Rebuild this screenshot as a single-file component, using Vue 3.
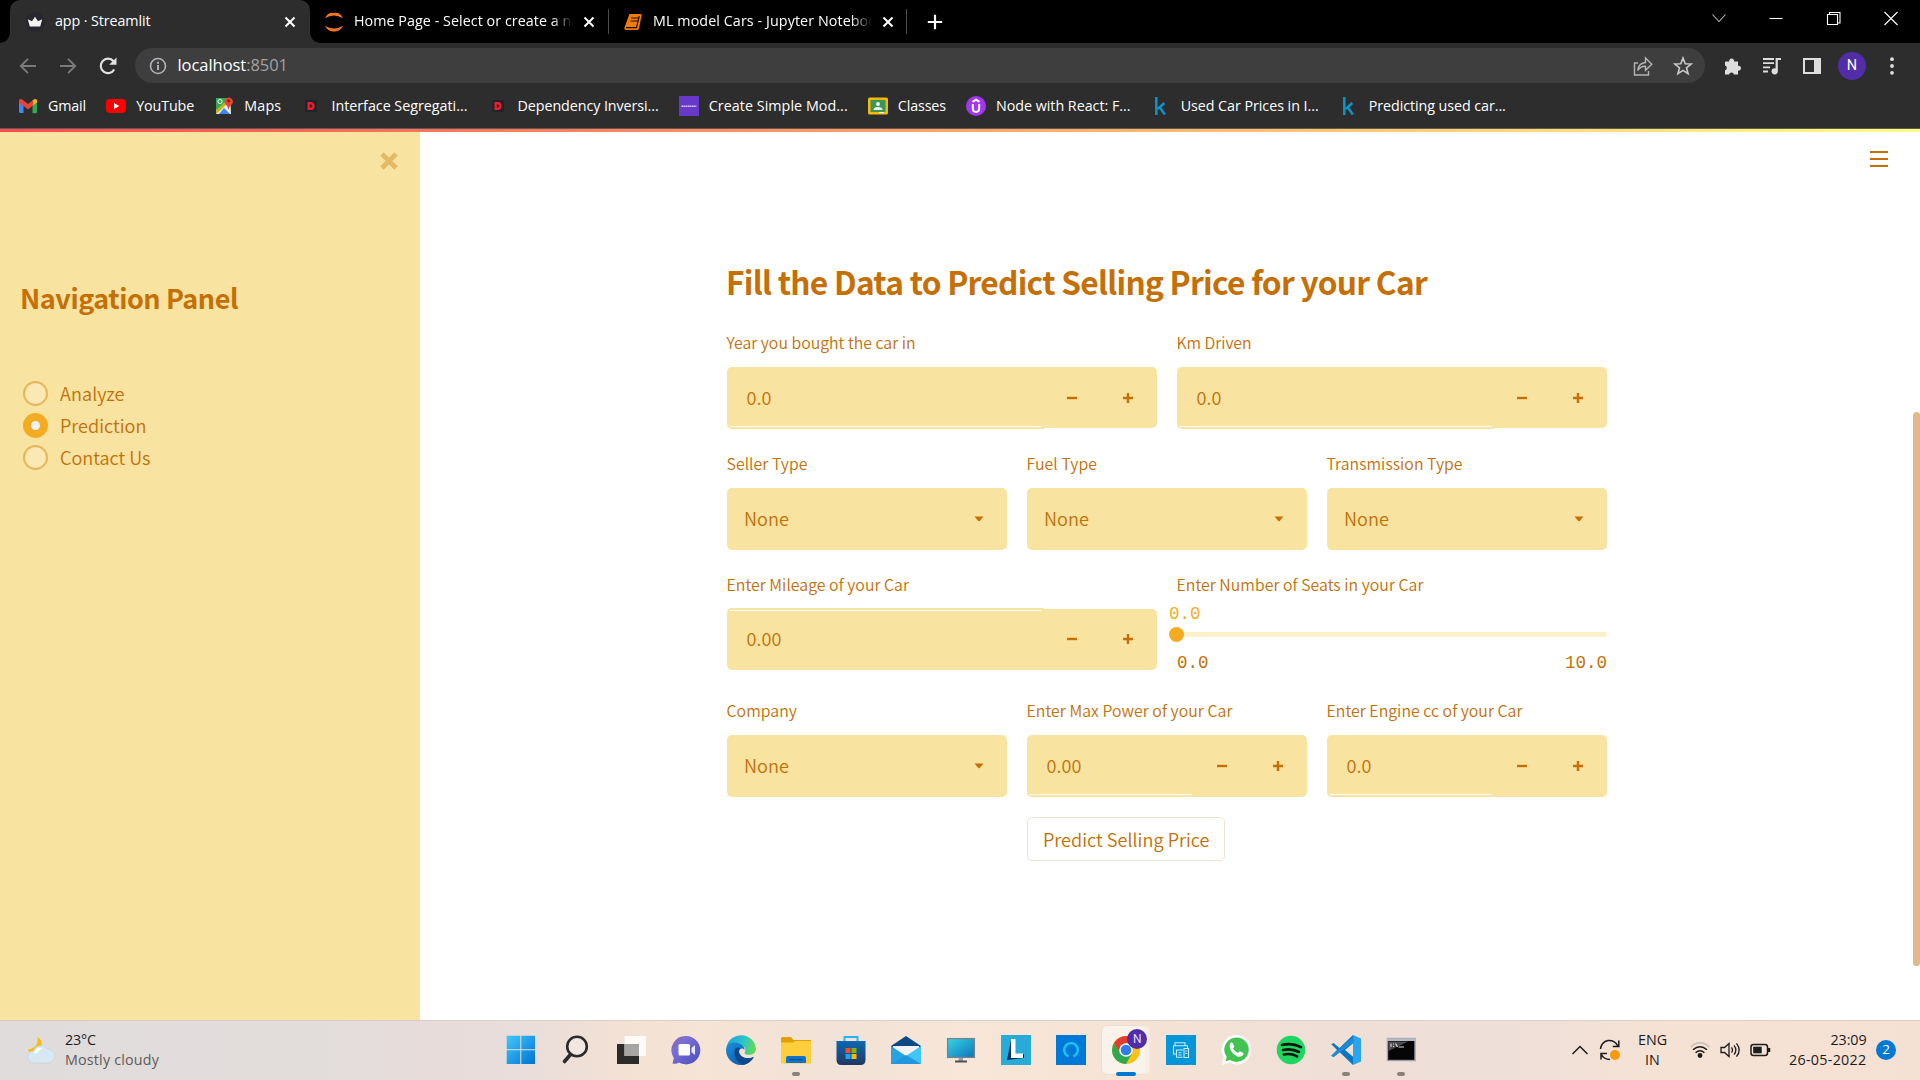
<script setup>
// Spreads letters so a label takes exactly the given width.
const vFit = {
  mounted(el, { value }) {
    const natural = el.getBoundingClientRect().width
    el.style.letterSpacing = (value - natural) / el.textContent.length + 'px'
  },
}

const dIcon = '<rect x="4" y="4" width="12" height="12" rx="2" fill="#222326"/><path d="M6.500 6h3.300q3.700 0 3.700 4t-3.700 4H6.500z" fill="#ee1c2e"/><path d="M9.300 8.300v3.400l2-1.700z" fill="#222326" stroke="#222326" stroke-width=".6"/>'
const kIcon = '<path d="M5.300 1v18M13.300 7l-6.500 6M8.800 11.200l5 7.300" stroke="#0f93c4" stroke-width="2.500" fill="none"/>'
const bookmarks = [
  { t: 'Gmail', w: 38, i: '<path d="M1 16.500V5l4.500 3.500v8.500H2q-1 0-1-1z" fill="#4285f4"/><path d="M14.500 8.500L19 5v11.500q0 .8-1 .8h-3.500z" fill="#34a853"/><path d="M14.500 4.500l1.300-1Q19 2 19 5v1.300l-4.500 3.500z" fill="#fbbc04"/><path d="M1 5q0-3 3.200-1.500L10 8l5-3.800v5.400l-5 3.800-9-7z" fill="#ea4335"/>' },
  { t: 'YouTube', w: 58, i: '<rect x="0" y="3" width="20" height="14" rx="4" fill="#f00"/><path d="M8 7v6l5.300-3z" fill="#fff"/>' },
  { t: 'Maps', w: 37, i: '<path d="M2 2h15v16H2z" fill="#34a853"/><path d="M2 18L16 5l1 13z" fill="#e8eaed"/><path d="M5 18l5-6 6 6z" fill="#4285f4"/><path d="M2 18V14L12 5l2 2z" fill="#fbbc04" opacity=".7"/><circle cx="6" cy="5.500" r="2.100" fill="none" stroke="#fff" stroke-width=".9"/><path d="M14.500 14q-.5-3.500-2.600-5.500a4 4 0 1 1 5.700 0Q15.200 10 14.500 14z" fill="#ea4335"/><circle cx="14.600" cy="5" r="1.400" fill="#8c1a11"/>' },
  { t: 'Interface Segregati...', w: 136, i: dIcon },
  { t: 'Dependency Inversi...', w: 141, i: dIcon },
  { t: 'Create Simple Mod...', w: 139, i: '<rect width="20" height="20" fill="#6639c8"/><path d="M2.500 10.300h15" stroke="#d9ccf5" stroke-width="1.500" stroke-dasharray="1.600 .5"/>' },
  { t: 'Classes', w: 48, i: '<rect y="1.500" width="20" height="17" rx="1.500" fill="#f4b80f"/><rect x="2.500" y="4" width="15" height="12" fill="#3d9655"/><circle cx="10" cy="8" r="1.900" fill="#fff"/><path d="M5.500 14q0-3 4.500-3t4.500 3z" fill="#e8f3ea"/><path d="M11 16h5v1.200h-5z" fill="#fff"/>' },
  { t: 'Node with React: F...', w: 134.5, i: '<circle cx="10" cy="10" r="10" fill="#a435f0"/><path d="M6.500 5.800L10 3.700l3.500 2.100M6.800 8v4.500q0 3.400 3.200 3.400t3.200-3.400V8" stroke="#fff" stroke-width="2" fill="none"/>' },
  { t: 'Used Car Prices in I...', w: 138, i: kIcon },
  { t: 'Predicting used car...', w: 137, i: kIcon },
]

const toolIcons = [
  '<path d="M3.500 5.500h3.700a2.500 2.500 0 1 1 4.900 0H16v4.200a2.500 2.500 0 1 1 0 4.900V18.500h-4a2.500 2.500 0 0 0-4.900 0H3v-4.200a2.500 2.500 0 0 0 0-4.800V6z" fill="#dedede"/>',
  '<path d="M1 3h11M1 7.200h11M1 11.400h7M1 15.500h5" stroke="#dedede" stroke-width="1.800"/><path d="M14.700 15V3H19" stroke="#dedede" stroke-width="2.200" fill="none"/><circle cx="12.700" cy="15.300" r="3.100" fill="#dedede"/>',
  '<path d="M2 3h16v14H2z" fill="none" stroke="#dedede" stroke-width="2"/><path d="M12 2h7v16h-7z" fill="#dedede"/>',
]

const nav = [
  { t: 'Analyze', w: 64.5 },
  { t: 'Prediction', w: 86.5, on: true },
  { t: 'Contact Us', w: 90.5 },
]

const rows = [
  { cls: 'r1', f: [
    { l: 'Year you bought the car in', w: 189, v: '0.0', vw: 25, k: 'num' },
    { l: 'Km Driven', w: 75, v: '0.0', vw: 25, k: 'num' },
  ] },
  { cls: 'r2', f: [
    { l: 'Seller Type', w: 81, k: 'sel' },
    { l: 'Fuel Type', w: 70.5, k: 'sel' },
    { l: 'Transmission Type', w: 136, k: 'sel' },
  ] },
  { cls: 'r3', f: [
    { l: 'Enter Mileage of your Car', w: 182.5, v: '0.00', vw: 35, k: 'num' },
    { l: 'Enter Number of Seats in your Car', w: 247, k: 'slider' },
  ] },
  { cls: 'r4', f: [
    { l: 'Company', w: 70.5, k: 'sel' },
    { l: 'Enter Max Power of your Car', w: 206, v: '0.00', vw: 35, k: 'num' },
    { l: 'Enter Engine cc of your Car', w: 196, v: '0.0', vw: 25, k: 'num' },
  ] },
]

const apps = [
  { n: 'start', i: '<defs><linearGradient id="wn" x1="0" y1="0" x2="1" y2="1" gradientUnits="objectBoundingBox"><stop stop-color="#42c8fb"/><stop offset="1" stop-color="#0072d6"/></linearGradient></defs><path d="M.7.700h13.600v13.600H.7zM15.300.7H29v13.600H15.300zM.7 15.300h13.600V29H.7zM15.300 15.300H29V29H15.300z" fill="url(#wn)"/>' },
  { n: 'search', i: '<circle cx="16" cy="11.500" r="9.800" fill="#fff" fill-opacity=".25" stroke="#2b2b2b" stroke-width="2.600"/><path d="M9.500 19.500L3.500 26.500" stroke="#2b2b2b" stroke-width="3.600" stroke-linecap="round"/>' },
  { n: 'tasks', i: '<path d="M1 9h22v20H1z" fill="#2c2c2a"/><path d="M8.500 1H30v20H8.500z" fill="#fff" fill-opacity=".85"/><path d="M8.500 9H23v12H8.500z" fill="#a6a5a3"/>' },
  { n: 'chat', i: '<defs><linearGradient id="ch" x1="0" y1="0" x2="1" y2="1"><stop stop-color="#8a61a8"/><stop offset=".3" stop-color="#7b70d4"/><stop offset="1" stop-color="#4a4fbf"/></linearGradient></defs><path d="M15 1a14.200 14.200 0 1 1-7 26.500Q5 29.500 1.500 28.500L2.800 23A14.200 14.200 0 0 1 15 1z" fill="url(#ch)"/><rect x="7.500" y="9" width="11.500" height="11.500" rx="1.500" fill="#fff"/><path d="M20.500 13l3.500-3v10l-3.500-3z" fill="#e8e8fb"/>' },
  { n: 'edge', i: '<defs><linearGradient id="e1" x1="0" y1=".3" x2="1" y2=".5"><stop stop-color="#1f9ede"/><stop offset=".55" stop-color="#2cc5c9"/><stop offset="1" stop-color="#62dc4c"/></linearGradient><linearGradient id="e2" x1="0" y1="0" x2="1" y2="1"><stop stop-color="#1a8fdd"/><stop offset="1" stop-color="#0c4f9f"/></linearGradient></defs><path d="M.5 12A15 15 0 0 1 30 13c.5 5-4 7.500-8.500 6.800-3-.5-3.500-1.800-2.500-3.300 1.500-2.500-1-6.500-6-6.500C7 10 2 13 .5 12z" fill="url(#e1)"/><path d="M0 15c0-5 4.500-8 9-7.500 6 .5 10 4 9.500 7.500-1.500-2.500-5-2-5.500 1.500-.5 5 7 9 14.500 5.500C24 27.500 20 30 15 30 6.500 30 0 23 0 15z" fill="url(#e2)"/><path d="M9.500 13C6 20 11 28.500 18 29.700 23 28.500 26 25.500 28 22c-8 3.500-15-1-15-5.500 0-1.500.5-2.800 1.500-3.300-1.500-1-3.500-.9-5-.2z" fill="#0d4a8d"/>' },
  { n: 'files', run: true, i: '<path d="M0 3.500Q0 2 1.500 2H10l2.500 3H30v8H0z" fill="#dfa104"/><path d="M0 7.500h12.500L14 6h16v22.500H0z" fill="#fdcf3d"/><path d="M5 28V23q0-2 2-2h16q2 0 2 2v5z" fill="#1272c8"/><path d="M8.500 24.700h13" stroke="#0a4f94" stroke-width="1.200"/>' },
  { n: 'store', i: '<defs><linearGradient id="st" x1="0" y1="0" x2="0" y2="1"><stop stop-color="#0b69b5"/><stop offset="1" stop-color="#213763"/></linearGradient></defs><path d="M8.500 7V2h13v5" fill="none" stroke="#27b5ef" stroke-width="2"/><path d="M.5 6h29v19q0 5-5 5h-19q-5 0-5-5z" fill="url(#st)"/><path d="M9.500 13h5v5h-5z" fill="#f25022"/><path d="M15.500 13h5v5h-5z" fill="#7fba00"/><path d="M9.500 19h5v5h-5z" fill="#1aa7ee"/><path d="M15.500 19h5v5h-5z" fill="#ffb900"/>' },
  { n: 'mail', i: '<path d="M0 11L15 1l15 10-3 8H3z" fill="#0b4a87"/><path d="M2 11h26v6l-13 6L2 17z" fill="#f3f3f5"/><path d="M0 11l15 10L30 29H0z" fill="#28a3e6"/><path d="M30 11L15 21l15 8z" fill="#3fc6f6"/><path d="M0 29L15 20l15 9z" fill="#2197df"/>' },
  { n: 'pc', i: '<defs><linearGradient id="pc" x1="0" y1="0" x2="1" y2="1"><stop stop-color="#35d5e3"/><stop offset="1" stop-color="#0f73bd"/></linearGradient></defs><rect x="1.600" y="3.600" width="26.800" height="18.800" fill="url(#pc)" stroke="#77838c" stroke-width="1.300"/><path d="M12.500 23h4.500v3h-4.500z" fill="#9aa1a6"/><path d="M9 25.500h12v2H9z" fill="#4a5157"/>' },
  { n: 'lens', i: '<rect width="30" height="30" fill="#27acd9"/><path d="M10 5L6 25l17-2V19H14z" fill="#0b2f6b"/><path d="M10 4h4.500v14.500H22V23H10z" fill="#fff"/>' },
  { n: 'alexa', i: '<rect width="30" height="30" fill="#0078d7"/><path d="M12.500 21.300a6.800 6.800 0 1 1 5 0" fill="none" stroke="#18c8fb" stroke-width="2.300"/>' },
  { n: 'chrome', run: true, active: true, i: '<circle cx="15" cy="15" r="14" fill="#fbc116"/><path d="M2.900 8A14 14 0 0 1 27.100 8H15L8.900 18.500z" fill="#e33b2e"/><path d="M2.900 8a14 14 0 0 0 12.100 21l6-10.500h-12z" fill="#2da94f"/><circle cx="15" cy="15" r="6.800" fill="#fff"/><circle cx="15" cy="15" r="5.300" fill="#2f7de9"/>' },
  { n: 'printer', i: '<rect width="30" height="30" fill="#0596d9"/><path d="M9 10.500V7.700h10v2.800M10 19H7.500v-8.300h14V13M10.500 15h6.500M10.500 14.800v7.500h6M12.500 17.700h3M12.500 20h3M18 13.500h4.500v9H18zM19.300 16h2M19.300 18.500h2" fill="none" stroke="#c9ebfa" stroke-width="1.100"/>' },
  { n: 'whatsapp', i: '<path d="M15.500 0A14.700 14.700 0 1 1 8.500 27.500L.7 30l2.200-7.700A14.700 14.700 0 0 1 15.500 0z" fill="#fff"/><path d="M15.500 2.500a12.200 12.200 0 1 1-6.500 22.500l-4.500 1.200 1.200-4.300A12.200 12.200 0 0 1 15.500 2.500z" fill="#43c351"/><path d="M9 8.500q1.500-2 3 0l1.200 2.700q0 1-1.200 2.200 1.700 3.300 5 4.600l1.800-1.800q3 1 3.700 2.100c0 3-3.500 4-6 3.200C12 19.500 7.500 14.500 9 8.500z" fill="#fff"/>' },
  { n: 'spotify', i: '<circle cx="15" cy="15" r="14.300" fill="#1fd760"/><path d="M6 10q10-2.500 19 2.200M7 15q8.500-2 16 2M7.800 19.500q7-1.500 13.200 1.800" fill="none" stroke="#0b140e" stroke-width="2.600" stroke-linecap="round"/>' },
  { n: 'code', run: true, i: '<path d="M22 0L8.500 13 2.500 8 .3 9.300 6 15 .3 20.700 2.500 22l6-5L22 30l1-7.500-9-7.500 9-7.500z" fill="#0d76c2"/><path d="M22 0l8 3.500v23L22 30z" fill="#29a5ee"/><path d="M2.500 22L22.500 7.500V1.500L.3 20.700z" fill="#1b8bd6"/>' },
  { n: 'cmd', run: true, i: '<rect x="1.500" y="3.500" width="27.500" height="22" fill="#060606" stroke="#9da0aa" stroke-width="1.400"/><path d="M1 3.500h28.500v2.500H1z" fill="#b6bac6"/><path d="M2.300 6.500h20L2.300 16z" fill="#4b4b4b"/><path d="M5 8.500v3.500M7 9h1M7 11.500h1M9.500 8.500l2 3.500M12.500 12H18" stroke="#ddd" fill="none" stroke-width="1.100"/>' },
]
</script>

<template>
  <div class="screen">
    <header class="tabs">
      <div class="tab active">
        <svg class="fav" width="20" height="20" viewBox="0 0 20 20"><circle cx="10" cy="10" r="9.700" fill="#262730" /><path d="M2.800 7.300L7 9.300 10 4.800l3 4.500 4.200-2-2 7.200H4.800z" fill="#f3f3f3" /></svg>
        <span class="title"><span v-fit="95.500">app · Streamlit</span></span>
        <svg class="x" width="12" height="12" viewBox="0 0 12 12"><path d="M1.500 1.500l9 9M10.500 1.500l-9 9" /></svg>
      </div>
      <div class="tab second">
        <svg class="fav" width="20" height="20" viewBox="0 0 20 20"><path d="M1 6.200Q4 0 10 .9 16 0 19 6.200 10 .8 1 6.200zM1 13.800Q4 20 10 19.400 16 20 19 13.800 10 19.200 1 13.800z" fill="#f37626" /></svg>
        <span class="title fade"><span v-fit="226">Home Page - Select or create a no</span></span>
        <svg class="x" width="12" height="12" viewBox="0 0 12 12"><path d="M1.500 1.500l9 9M10.500 1.500l-9 9" /></svg>
      </div>
      <div class="tab third">
        <svg class="fav" width="20" height="20" viewBox="0 0 20 20"><path d="M6.500 2H17.500q1.500 0 1.100 1.500L16 16.500q-.4 1.500-2 1.500H3.200Q1 18 1.500 15.500z" fill="#f57c00" /><path d="M8 6h7.500M7.500 9H15M3 15.700h10.500L16.300 4" fill="none" stroke="#1b0d00" stroke-width="1.200" /></svg>
        <span class="title fade"><span v-fit="224">ML model Cars - Jupyter Noteboo</span></span>
        <svg class="x" width="12" height="12" viewBox="0 0 12 12"><path d="M1.500 1.500l9 9M10.500 1.500l-9 9" /></svg>
      </div>
      <svg class="plus" width="16" height="16" viewBox="0 0 16 16"><path d="M8 .8v14.400M.8 8h14.400" stroke="#fff" stroke-width="2.200" /></svg>
      <div class="win">
        <svg viewBox="0 0 16 16"><path d="M1.500 4.500L8 11.500l6.500-7" stroke="#bbb" /></svg>
        <svg viewBox="0 0 16 16"><path d="M1.500 8.500h13" /></svg>
        <svg viewBox="0 0 16 16"><path d="M1.500 4.500h10v10h-10zM3.500 4.500v-2h10.500v10.500H12" /></svg>
        <svg viewBox="0 0 16 16"><path d="M1.500 2l13 13M14.500 2l-13 13" /></svg>
      </div>
    </header>

    <div class="toolbar">
      <div class="arrows">
        <svg viewBox="0 0 20 20"><path d="M18 10H3M10 2.800L2.800 10l7.200 7.200" stroke="#7b7b7b" stroke-width="1.900" fill="none" /></svg>
        <svg viewBox="0 0 20 20"><path d="M2 10h15M10 2.800l7.200 7.200-7.200 7.200" stroke="#7b7b7b" stroke-width="1.900" fill="none" /></svg>
        <svg viewBox="0 0 20 20"><path d="M16.200 13.500A7.200 7.200 0 1 1 15.500 5.300" stroke="#e2e2e2" stroke-width="2.200" fill="none" /><path d="M18.500 1.500v7.300h-7.300z" fill="#e2e2e2" /></svg>
      </div>
      <div class="omni">
        <svg class="info" width="18" height="18" viewBox="0 0 18 18"><circle cx="9" cy="9" r="7.500" fill="none" stroke="#b0b3b8" stroke-width="1.600" /><path d="M9 8v5M9 4.800v1.900" stroke="#b0b3b8" stroke-width="1.900" /></svg>
        <span v-fit="110.500" class="url">localhost<i>:8501</i></span>
        <svg class="share" width="20" height="20" viewBox="0 0 20 20"><path d="M5 7H1.500v12h14v-4M4.800 14.500Q5.500 7 12.500 6.500V2l6.300 6.300-6.300 6v-4Q7.500 10 4.800 14.500z" fill="none" stroke="#b4b4b4" stroke-width="1.400" /></svg>
        <svg width="20" height="20" viewBox="0 0 20 20"><path d="M10 2l2.200 5.700 6 .3-4.700 3.800 1.600 5.900L10 14.400l-5.100 3.300 1.600-5.900L1.800 8l6-.3z" fill="none" stroke="#c9c9c9" stroke-width="1.600" /></svg>
      </div>
      <div class="tools">
        <svg v-for="(t, n) in toolIcons" :key="n" viewBox="0 0 20 20" v-html="t" />
        <span class="me">N</span>
        <svg viewBox="0 0 20 20" fill="#dedede"><circle cx="10" cy="3.200" r="1.900" /><circle cx="10" cy="10" r="1.900" /><circle cx="10" cy="16.800" r="1.900" /></svg>
      </div>
    </div>

    <div class="bookmarks">
      <div v-for="b in bookmarks" :key="b.t" class="bm">
        <svg width="20" height="20" viewBox="0 0 20 20" v-html="b.i" />
        <span v-fit="b.w">{{ b.t }}</span>
      </div>
    </div>
    <div class="deco" />

    <div class="page">
      <aside>
        <svg class="close" width="18" height="18" viewBox="0 0 18 18"><path d="M2 2l14 14M16 2L2 16" stroke="#e4b964" stroke-width="4.600" /></svg>
        <h2><span v-fit="218">Navigation Panel</span></h2>
        <div v-for="n in nav" :key="n.t" class="radio" :class="{ on: n.on }">
          <b /><span v-fit="n.w">{{ n.t }}</span>
        </div>
      </aside>
      <main>
        <div class="content">
          <h1><span v-fit="701">Fill the Data to Predict Selling Price for your Car</span></h1>
          <div v-for="r in rows" :key="r.cls" class="row" :class="r.cls">
            <div v-for="f in r.f" :key="f.l" class="field">
              <label><span v-fit="f.w">{{ f.l }}</span></label>
              <div v-if="f.k === 'num'" class="box num">
                <div class="input"><span v-fit="f.vw">{{ f.v }}</span></div>
                <div class="steps">
                  <svg viewBox="0 0 10 10"><path d="M0 5h10" /></svg>
                  <svg viewBox="0 0 10 10"><path d="M0 5h10M5 0v10" /></svg>
                </div>
              </div>
              <div v-else-if="f.k === 'sel'" class="box sel">
                <span v-fit="45">None</span>
                <svg width="10" height="6" viewBox="0 0 10 6"><path d="M.5.500h9L5.700 5Q5 5.700 4.300 5z" fill="#c56f06" /></svg>
              </div>
              <div v-else class="slider">
                <span class="val">0.0</span>
                <div class="track"><b /></div>
                <div class="ticks"><span>0.0</span><span>10.0</span></div>
              </div>
            </div>
          </div>
          <button><span v-fit="166.500">Predict Selling Price</span></button>
        </div>
        <svg class="menu" width="18" height="18" viewBox="0 0 18 18"><path d="M0 2h18M0 9h18M0 16h18" stroke="#c56f06" stroke-width="2.200" /></svg>
        <div class="scroll" />
      </main>
    </div>

    <footer>
      <div class="weather">
        <svg width="30" height="28" viewBox="0 0 30 28"><path d="M11.500 1q5.500 3 4 10t-9 6Q3 16.500 1.500 13.500 13 12 11.500 1z" fill="#f8bd0d" /><path d="M8 27a6 6 0 0 1-.5-12 7.500 7.500 0 0 1 13.500-2 7 7 0 0 1 1.500 14z" fill="#d7e8f3" stroke="#bccfdc" stroke-width=".6" /><path d="M8 17q3-7 9-4-4 0-5.500 4z" fill="#fff" /></svg>
        <div class="two left"><span v-fit="31">23°C</span><span v-fit="94" class="dim">Mostly cloudy</span></div>
      </div>
      <div class="apps">
        <div v-for="a in apps" :key="a.n" class="app" :class="{ run: a.run, active: a.active }">
          <svg width="30" height="30" viewBox="0 0 30 30" v-html="a.i" />
          <span v-if="a.active" class="badge">N</span>
        </div>
      </div>
      <div class="tray">
        <svg class="up" width="18" height="12" viewBox="0 0 18 12"><path d="M1.500 10L9 2.500l7.500 7.500" /></svg>
        <svg class="sync" width="22" height="22" viewBox="0 0 22 22"><path d="M1.500 10a9 9 0 0 1 17.300-3M19.800 1.500v6h-6M2 20.500v-6h6M2 14.800q2.500 5.700 9 5.700" /><circle cx="16" cy="16" r="5" fill="#f99a08" stroke="none" /></svg>
        <div class="two mid lang"><span v-fit="29">ENG</span><span v-fit="15">IN</span></div>
        <svg class="wifi" width="20" height="18" viewBox="0 0 20 18"><path d="M.8 6Q10-2.500 19.200 6" stroke="#c8bdb6" /><path d="M3 8.700q7-6 14 0M5.600 11.700q4.400-4 8.800 0" /><circle cx="10" cy="14.500" r="1.700" fill="#1c1c1c" /></svg>
        <svg class="vol" width="20" height="18" viewBox="0 0 20 18"><path d="M1 6.500h3.500L9 2.500v13l-4.500-4H1zM11.500 6.300q2 2.700 0 5.400M14 4.300q3.700 4.700 0 9.400M16.500 2.300q5.300 6.700 0 13.400" stroke-width="1.300" /></svg>
        <svg class="bat" width="21" height="14" viewBox="0 0 21 14"><rect x="1" y="1.500" width="16.500" height="11" rx="2.500" /><rect x="3.200" y="3.700" width="8.500" height="6.600" fill="#1c1c1c" stroke="none" /><path d="M19 5v4" stroke-width="2.500" /></svg>
        <div class="two right"><span v-fit="36">23:09</span><span v-fit="77.500">26-05-2022</span></div>
        <span class="count">2</span>
      </div>
    </footer>
  </div>
</template>

<style>
html, body { margin: 0; overflow: hidden; }
</style>

<style scoped>
* { box-sizing: border-box; }
svg { display: block; flex: none; }
span { display: inline-block; white-space: nowrap; }
.screen { width: 1920px; height: 1080px; display: flex; flex-direction: column; font-family: "Open Sans", "Noto Sans", sans-serif; font-size: 14.3px; color: #fff; overflow: hidden; background: #fff; }

/* browser tabs */
.tabs { height: 43px; flex: none; background: #000; display: flex; align-items: center; padding-left: 10px; }
.tab { height: 43px; display: flex; align-items: center; flex: none; position: relative; }
.tab .title { line-height: 22px; margin-left: 10px; margin-top: -1px; }
.tab .x { margin-left: auto; }
.tab .x path { stroke: #fff; stroke-width: 2; }
.tab.active { width: 300px; background: #2d2d2d; border-radius: 10px 10px 0 0; padding: 0 14px 0 15px; }
.tab.active::before, .tab.active::after { content: ""; position: absolute; bottom: 0; width: 10px; height: 10px; }
.tab.active::before { left: -10px; background: radial-gradient(circle at 0 0, #000 9.500px, #2d2d2d 10px); }
.tab.active::after { right: -10px; background: radial-gradient(circle at 100% 0, #000 9.500px, #2d2d2d 10px); }
.tab.second { width: 299px; padding: 0 14px 0 14px; }
.tab.third { width: 298px; padding: 0 13px 0 14px; }
.tab.second::after, .tab.third::after { content: ""; position: absolute; right: 0; top: 9px; width: 1px; height: 25px; background: #4c4c4c; }
.fade { width: 227px; -webkit-mask-image: linear-gradient(90deg, #000 198px, transparent 219px); mask-image: linear-gradient(90deg, #000 198px, transparent 219px); }
.plus { margin-left: 20px; }
.win { margin-left: auto; display: flex; gap: 41.300px; padding: 0 21px 7px 0; }
.win svg { width: 16px; height: 16px; fill: none; stroke: #fff; stroke-width: 1.100; }

/* address bar */
.toolbar { height: 45px; flex: none; background: #2d2d2d; display: flex; align-items: center; }
.arrows { display: flex; gap: 20px; padding-left: 17.500px; width: 135px; }
.arrows svg { width: 20px; height: 20px; }
.omni { width: 1570px; height: 35px; border-radius: 18px; background: #3e3e3e; display: flex; align-items: center; padding: 0 12.500px 0 13.500px; }
.url { margin: -1px 0 0 11px; font-size: 16.500px; line-height: 24px; }
.url i { font-style: normal; color: #a2a2a2; }
.share { margin-left: auto; margin-right: 20px; }
.tools { display: flex; align-items: center; gap: 20px; margin-left: 17px; }
.tools svg { width: 20px; height: 20px; }
.me { width: 28px; height: 28px; margin: 0 -4px; border-radius: 50%; background: #512da8; font: 14.500px/28px Roboto, sans-serif; text-align: center; }

.bookmarks { height: 40px; flex: none; background: #2d2d2d; display: flex; align-items: center; gap: 20.150px; padding: 0 0 4px 18px; }
.bm { display: flex; align-items: center; gap: 10px; flex: none; }
.bm span { line-height: 22px; margin-top: -1px; }
.deco { height: 4px; flex: none; border-top: 1px solid #5a5a5c; background: linear-gradient(90deg, #ff4b4b, #fffd80); }

/* app */
.page { flex: none; height: 888px; display: flex; font-family: "Noto Sans CJK SC", "Open Sans", sans-serif; font-weight: 350; color: #c56f06; font-size: 18.100px; }
aside { width: 420px; background: #f8e3a0; padding: 20px 22px 0 23px; }
.close { margin-left: auto; }
h1, h2 { margin: 0; font-weight: 600; }
h2 { font-size: 27px; line-height: 40px; margin: 108px 0 59px -3px; }
.radio { height: 32px; display: flex; align-items: center; line-height: 32px; }
.radio b { width: 25px; height: 25px; border-radius: 50%; border: 2px solid #e4b65e; background: #fbe8b2; margin-right: 12px; }
.radio.on b { border: 8.500px solid #f3ac22; background: #f0f2f6; }
main { flex: 1; display: flex; align-items: flex-start; position: relative; background: #fff; }
.content { width: 880px; margin-left: 307px; padding-top: 129px; }
h1 { font-size: 31.700px; line-height: 40px; margin-bottom: 30px; margin-left: -1px; }
.row { display: flex; gap: 20px; margin-bottom: 22px; }
.field { flex: 1 1 0; min-width: 0; }
label { display: block; height: 24px; line-height: 24px; font-size: 15.850px; margin-bottom: 12px; margin-left: -.5px; }
.row:not(.r1) { margin-top: 23px; }
.row { margin-bottom: 0; }
.r3 label { margin-bottom: 11px; }
.row.r4 { margin-top: 29px; margin-bottom: 20px; }
.box { height: 62px; display: flex; align-items: center; }
.sel { background: #f8e3a0; border-radius: 5px; padding: 0 23px 0 17px; justify-content: space-between; line-height: 28px; }
.sel span { margin-top: -2px; }
.num { align-items: stretch; }
.input { flex: 1; background: #f8e3a0; border-radius: 5px 0 0 5px; padding-left: 19.500px; line-height: 60px; position: relative; }
.input::after { content: ""; position: absolute; left: 3px; right: 2px; bottom: 2px; height: 1px; background: #fff; }
.steps { width: 113px; background: #f8e3a0; border-radius: 0 5px 5px 0; display: flex; align-items: center; justify-content: space-between; padding: 0 24px 0 23px; }
.steps svg { width: 10px; height: 10px; }
.steps path { stroke: #c56f06; stroke-width: 2.400; }
.r1 .steps { height: 61px; }
.r3 .steps { height: 61px; margin-top: 1px; padding-bottom: 1px; }
.r3 .input::after { bottom: auto; top: 2px; }
.slider { font-family: "Liberation Mono", monospace; font-size: 17.500px; line-height: 20px; height: 62px; display: flex; flex-direction: column; }
.val { color: #f3ac22; margin: -4px 0 0 -8px; height: 20px; flex: none; }
.track { height: 5px; flex: none; margin-top: 8px; border-radius: 3px; background: #fbf0ca; position: relative; }
.track b { position: absolute; left: -8px; top: -5px; width: 15px; height: 15px; border-radius: 50%; background: #f3ac22; }
.ticks { display: flex; justify-content: space-between; margin-top: 16px; }
button { display: block; margin: 0 0 0 300px; width: 198px; height: 44px; padding: 0 0 1px 15px; text-align: left; border: 1px solid #f3e2cd; border-radius: 5px; background: #fff; font: inherit; color: inherit; line-height: 40px; }
.menu { margin: 18px 0 0 263px; }
.scroll { position: absolute; right: 0; top: 280px; width: 7px; height: 554px; border-radius: 4px; background: #dfb98b; }

/* taskbar */
footer { flex: none; height: 60px; border-top: 1px solid #d9cec9; display: flex; align-items: center; padding-bottom: 1px; color: #1c1c1c; background: linear-gradient(90deg, #e0dcdc 0, #e2dddb 330px, #e7dcda 420px, #e9dedb 520px, #f3e1d3 630px, #f6e4d6 700px, #f2e2d7 840px, #f8e6d8 960px, #f5e3d5 1150px, #efdfd7 1330px, #eedfd8 1500px, #f5e2d5 1660px, #f5e1d3 1920px); }
.weather { display: flex; align-items: center; padding-left: 26px; gap: 9px; width: 493px; }
.two { display: flex; flex-direction: column; line-height: 20px; }
.left { align-items: flex-start; }
.mid { align-items: center; }
.right { align-items: flex-end; }
.dim { color: #5e5b5a; }
.apps { display: flex; }
.app { width: 55.030px; height: 58px; display: flex; align-items: center; justify-content: center; position: relative; }
.app svg { position: relative; }
.app.run::after { content: ""; position: absolute; left: 23.500px; bottom: 3px; width: 8px; height: 4px; border-radius: 2px; background: #8b817b; }
.app.active::before { content: ""; position: absolute; left: 3.500px; top: 5px; width: 43px; height: 48px; border-radius: 5px; background: #faf3ec; box-shadow: 5px 0 0 -.5px #f8eee5, 0 0 0 1px #ecddd1; }
.app.active::after { left: 18px; width: 20px; background: #0078d4; }
.badge { position: absolute; left: 29px; top: 8px; width: 20px; height: 20px; border-radius: 50%; background: #512da8; color: #e4dcf5; font: 12px/20px Roboto, sans-serif; text-align: center; }
.tray { margin-left: auto; display: flex; align-items: center; padding-right: 24px; }
.tray svg { fill: none; stroke: #1c1c1c; stroke-width: 1.500; }
.up { margin-right: 10px; }
.sync { margin-right: 17px; }
.lang { margin-right: 23px; }
.wifi { margin-right: 10px; }
.vol { margin-right: 10px; }
.bat { margin-right: 18px; }
.count { margin-left: 9.500px; width: 20px; height: 20px; border-radius: 50%; background: #0078d4; color: #fff; font-size: 13.500px; line-height: 19px; text-align: center; }
</style>
